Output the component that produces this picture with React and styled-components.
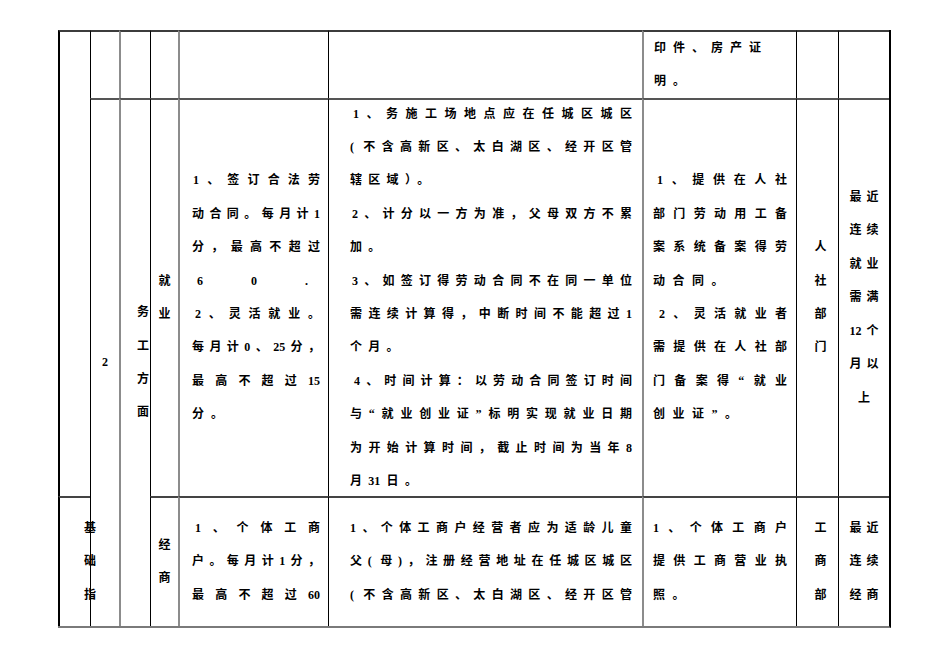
import styled, { createGlobalStyle, css } from "styled-components";

const GlobalStyle = createGlobalStyle`
  * { box-sizing: border-box; }
  body {
    margin: 0;
    background: #fff;
  }
`;

// 每一欄左邊框（依照原稿的深淺）
const EDGES = [
  "2px solid #000",
  "1px solid #000",
  "2px solid #8c8c8c",
  "1px solid #000",
  "2px solid #8c8c8c",
  "1px solid #000",
  "2px solid #8c8c8c",
  "1px solid #000",
  "1px solid #000",
];

// 每一列上邊框
const TOPS = ["2px solid #3c3c3c", "2px solid #555", "2px solid #444"];

const Sheet = styled.div`
  display: grid;
  grid-template-columns: 32px 29px 31px 28px 150px 314px 154px 42px 51px;
  grid-template-rows: 68px 398px 130px;
  width: max-content;
  margin: 30px 0 0 58px;
  border-right: 2px solid #000;
  border-bottom: 2px solid #7a7a7a;
  font-family: "Liberation Serif", "Noto Sans CJK SC", serif;
  font-size: 12px;
  font-weight: 700;
  line-height: 33.4px;
  color: #000;
`;

const Cell = styled.div`
  grid-column: ${(p) => p.$col + 1};
  grid-row: ${(p) => p.$row + 1} / span ${(p) => p.$span || 1};
  display: flex;
  flex-direction: column;
  justify-content: center;
  align-items: ${(p) => p.$align || "stretch"};
  padding: ${(p) => p.$pad || "0"};
  border-left: ${(p) => EDGES[p.$col]};
  border-top: ${(p) => TOPS[p.$row]};
  --ls: ${(p) => p.$ls || 0}px;
  min-width: 0;
`;

const Line = styled.div`
  white-space: nowrap;
  letter-spacing: var(--ls);
  padding: ${(p) => p.$inset || "0"};

  ${(p) =>
    p.$fill &&
    css`
      white-space: normal;
      letter-spacing: 0;
      text-align: justify;
      text-align-last: justify;
    `}
`;

// 數字不拉開字距
const Num = styled.span`
  letter-spacing: 0;
  margin-right: var(--ls);
`;

const j = (t, inset) => ({ t, inset, fill: true });

const TEXT4 = { $pad: "0 8px 0 12px", $ls: 7 };
const TEXT5 = { $pad: "0 10px 0 21px", $ls: 6.3 };
const TEXT6 = { $pad: "0 9px 0 9px", $ls: 7.5 };
const MID = { $align: "center" };
const MID7 = { $align: "center", $pad: "0 0 0 6px" };
const MID8 = { $align: "center", $pad: "0 0 0 5px", $ls: 5 };

const cells = [
  // 上一頁延續的列
  { $col: 0, $row: 0, $span: 2 },
  { $col: 1, $row: 0 },
  { $col: 2, $row: 0 },
  { $col: 3, $row: 0 },
  { $col: 4, $row: 0 },
  { $col: 5, $row: 0 },
  { $col: 6, $row: 0, $pad: "0 9px 0 10px", $ls: 7, lines: ["印件、房产证", "明。"] },
  { $col: 7, $row: 0 },
  { $col: 8, $row: 0 },

  // 就業
  { $col: 1, $row: 1, $span: 2, ...MID, lines: ["2"] },
  { $col: 2, $row: 1, $span: 2, $align: "flex-end", $pad: "0 1px 0 0", lines: ["务", "工", "方", "面"] },
  { $col: 3, $row: 1, ...MID, lines: ["就", "业"] },
  {
    $col: 4,
    $row: 1,
    ...TEXT4,
    lines: [
      j("1、签订合法劳", "0 0 0 1px"),
      j("动合同。每月计1"),
      j("分，最高不超过"),
      j("6 0 .", "0 12px 0 5px"),
      j("2、灵活就业。", "0 0 0 3px"),
      j("每月计0、25分，"),
      j("最高不超过15"),
      "分。",
    ],
  },
  {
    $col: 5,
    $row: 1,
    ...TEXT5,
    lines: [
      j("1、务施工场地点应在任城区城区", "0 0 0 3px"),
      j("( 不含高新区、太白湖区、经开区管"),
      "辖区域）。",
      j("2、计分以一方为准，父母双方不累", "0 0 0 2px"),
      "加。",
      j("3、如签订得劳动合同不在同一单位", "0 0 0 2px"),
      j("需连续计算得，中断时间不能超过1"),
      "个月。",
      j("4、时间计算：以劳动合同签订时间", "0 0 0 4px"),
      j("与“就业创业证”标明实现就业日期"),
      j("为开始计算时间，截止时间为当年8"),
      <>
        月<Num>31</Num>日。
      </>,
    ],
  },
  {
    $col: 6,
    $row: 1,
    ...TEXT6,
    lines: [
      j("1、提供在人社", "0 0 0 4px"),
      j("部门劳动用工备"),
      j("案系统备案得劳"),
      "动合同。",
      j("2、灵活就业者", "0 0 0 6px"),
      j("需提供在人社部"),
      j("门备案得“就业"),
      "创业证”。",
    ],
  },
  { $col: 7, $row: 1, ...MID7, lines: ["人", "社", "部", "门"] },
  {
    $col: 8,
    $row: 1,
    ...MID8,
    lines: [
      "最近",
      "连续",
      "就业",
      "需满",
      <>
        <Num>12</Num>个
      </>,
      "月以",
      "上",
    ],
  },

  // 經商
  { $col: 0, $row: 2, $align: "center", $pad: "0 0 0 30px", lines: ["基", "础", "指"] },
  { $col: 3, $row: 2, ...MID, lines: ["经", "商"] },
  {
    $col: 4,
    $row: 2,
    ...TEXT4,
    lines: [j("1、个体工商", "0 0 0 3px"), j("户。每月计1分，"), j("最高不超过60")],
  },
  {
    $col: 5,
    $row: 2,
    ...TEXT5,
    lines: [
      j("1、个体工商户经营者应为适龄儿童"),
      j("父( 母)，注册经营地址在任城区城区"),
      j("( 不含高新区、太白湖区、经开区管"),
    ],
  },
  {
    $col: 6,
    $row: 2,
    ...TEXT6,
    lines: [j("1、个体工商户"), j("提供工商营业执"), "照。"],
  },
  { $col: 7, $row: 2, ...MID7, lines: ["工", "商", "部"] },
  { $col: 8, $row: 2, ...MID8, lines: ["最近", "连续", "经商"] },
];

const App = () => {
  return (
    <>
      <GlobalStyle />
      <Sheet>
        {cells.map(({ lines = [], ...props }, i) => (
          <Cell key={i} {...props}>
            {lines.map((l, k) =>
              l && l.fill ? (
                <Line key={k} $fill $inset={l.inset}>
                  {l.t}
                </Line>
              ) : (
                <Line key={k}>{l}</Line>
              )
            )}
          </Cell>
        ))}
      </Sheet>
    </>
  );
};

export default App;
